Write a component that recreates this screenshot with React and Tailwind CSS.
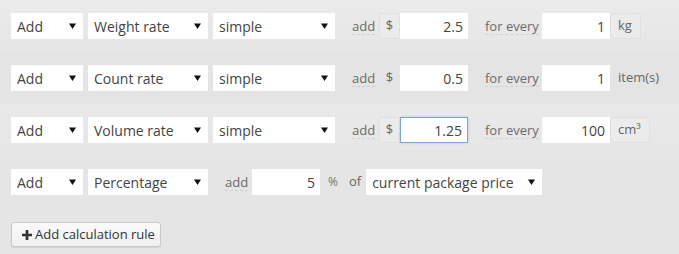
import React from 'react';

const Arrow = () => (
  <svg width="7" height="6" viewBox="0 0 7 6" className="shrink-0">
    <path d="M0 0.5 L7 0.5 L3.5 6 Z" fill="#111" />
  </svg>
);

const Select = ({ value, width }) => (
  <div
    className="h-[26px] bg-white flex items-center justify-between pl-[6px] pr-[7px] text-[14px] text-[#444] whitespace-nowrap shrink-0"
    style={{ width }}
  >
    <span>{value}</span>
    <Arrow />
  </div>
);

const Label = ({ children }) => (
  <span className="text-[13px] text-[#6a6a6a] whitespace-nowrap border-b border-dashed border-[#d2d2d2] leading-[16px]">
    {children}
  </span>
);

const Input = ({ value, focused }) => (
  <div
    className={
      'h-[26px] w-[68px] bg-white flex items-center justify-end pr-[5px] text-[14px] text-[#444] shrink-0 ' +
      (focused ? 'border border-[#7aa7d6] shadow-[0_0_2px_#9ec3ea]' : '')
    }
  >
    {value}
  </div>
);

const Addon = ({ children, boxed, className = '' }) => (
  <div
    className={
      'h-[26px] flex items-center text-[13px] text-[#666] whitespace-nowrap shrink-0 ' +
      (boxed ? 'bg-[#ebebeb] border border-[#e0e0e0] ' : 'border border-transparent ') +
      className
    }
  >
    {children}
  </div>
);

const RateRow = ({ type, value, per, unit, boxed, focused, bg }) => (
  <div className={`h-[52px] pt-[13px] pl-[11px] flex items-start ${bg}`}>
    <Select value="Add" width={72} />
    <div className="w-[5px]" />
    <Select value={type} width={120} />
    <div className="w-[5px]" />
    <Select value="simple" width={122} />
    <div className="h-[26px] flex items-center ml-[17px] w-[22px]">
      <Label>add</Label>
    </div>
    <Addon boxed={boxed} className="ml-[5px] w-[21px] justify-center rounded-l-[2px]">$</Addon>
    <Input value={value} focused={focused} />
    <div className="h-[26px] flex items-center ml-[17px] w-[53px]">
      <Label>for every</Label>
    </div>
    <div className="w-[4px]" />
    <Input value={per} />
    <Addon boxed={boxed} className="pl-[7px] pr-[8px] rounded-r-[2px]">{unit}</Addon>
  </div>
);

export default function App() {
  return (
    <div
      className="w-[679px] h-[254px] bg-[#e5e5e5] overflow-hidden"
      style={{ fontFamily: '"Open Sans", "Liberation Sans", sans-serif' }}
    >
      <RateRow type="Weight rate" value="2.5" per="1" unit="kg" boxed bg="bg-gradient-to-b from-[#ebebeb] to-[#e6e6e6]" />
      <RateRow type="Count rate" value="0.5" per="1" unit="item(s)" bg="bg-[#e4e4e4]" />
      <RateRow type="Volume rate" value="1.25" per="100" unit={<span>cm³</span>} boxed focused bg="bg-gradient-to-b from-[#e9e9e9] to-[#e6e6e6]" />

      <div className="h-[52px] pt-[13px] pl-[11px] flex items-start">
        <Select value="Add" width={72} />
        <div className="w-[5px]" />
        <Select value="Percentage" width={120} />
        <div className="h-[26px] flex items-center ml-[17px] w-[23px]">
          <Label>add</Label>
        </div>
        <div className="w-[4px]" />
        <Input value="5" />
        <div className="h-[26px] flex items-center ml-[8px] text-[12px] text-[#777]">%</div>
        <div className="h-[26px] flex items-center ml-[11px] text-[13px] text-[#666]">of</div>
        <div className="w-[5px]" />
        <Select value="current package price" width={176} />
      </div>

      <div className="pl-[11px] mt-[14px]">
        <button className="h-[25px] w-[150px] flex items-center gap-[3px] pl-[10px] bg-gradient-to-b from-[#fafafa] to-[#f0f0f0] border border-[#c8c8c8] rounded-[3px] shadow-[0_1px_1px_rgba(0,0,0,0.08)] text-[13px] text-[#333] whitespace-nowrap">
          <svg width="10" height="10" viewBox="0 0 11 11">
            <path d="M4 0 H7 V4 H11 V7 H7 V11 H4 V7 H0 V4 H4 Z" fill="#333" />
          </svg>
          <span>Add calculation rule</span>
        </button>
      </div>
    </div>
  );
}
